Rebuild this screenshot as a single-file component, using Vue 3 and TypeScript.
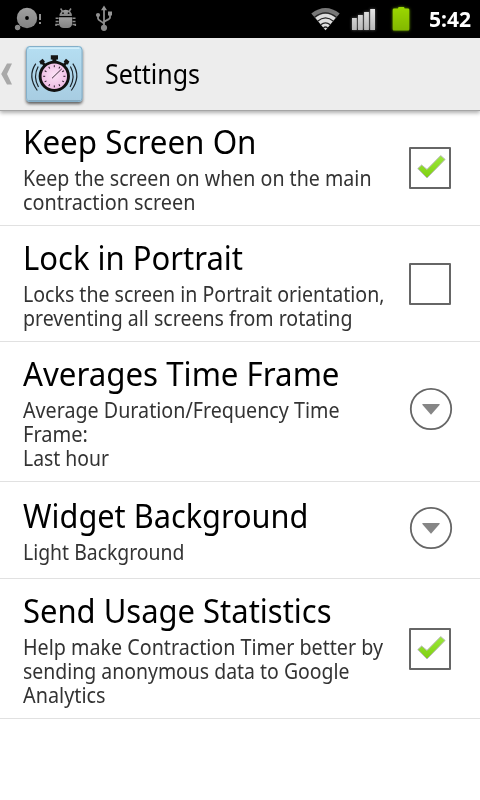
<script setup lang="ts">
interface Line { text: string; width: number }
interface Setting { title: Line; summary: Line[]; control: 'check' | 'menu'; checked?: boolean }

const line = (text: string, width: number): Line => ({ text, width })

const settings: Setting[] = [
  {
    title: line('Keep Screen On', 233.5),
    summary: [line('Keep the screen on when on the main', 348.5), line('contraction screen', 172.5)],
    control: 'check', checked: true,
  },
  {
    title: line('Lock in Portrait', 220),
    summary: [line('Locks the screen in Portrait orientation,', 361.5), line('preventing all screens from rotating', 329.5)],
    control: 'check', checked: false,
  },
  {
    title: line('Averages Time Frame', 316.5),
    summary: [line('Average Duration/Frequency Time', 316.5), line('Frame:', 65), line('Last hour', 86)],
    control: 'menu',
  },
  {
    title: line('Widget Background', 285.5),
    summary: [line('Light Background', 161.5)],
    control: 'menu',
  },
  {
    title: line('Send Usage Statistics', 308.5),
    summary: [line('Help make Contraction Timer better by', 360), line('sending anonymous data to Google', 326.5), line('Analytics', 82.5)],
    control: 'check', checked: true,
  },
]

// Condenses a line of text horizontally to the given width.
const vFit = {
  mounted(el: HTMLElement, binding: { value: number }) {
    el.style.transform = `scaleX(${binding.value / el.getBoundingClientRect().width})`
  },
}

const ticks = Array.from({ length: 12 }, (_, i) => i * 30)
</script>

<template>
  <div class="screen">
    <div class="status">
      <svg class="notifications" width="130" height="38" viewBox="0 0 130 38">
        <defs>
          <linearGradient id="grey" x1="0" y1="0" x2="0" y2="1">
            <stop offset="0" stop-color="#a0a0a0" /><stop offset="1" stop-color="#828282" />
          </linearGradient>
        </defs>
        <circle cx="27" cy="18" r="10.2" fill="url(#grey)" />
        <circle cx="27" cy="18" r="1.9" fill="#000" />
        <circle cx="17.6" cy="27.5" r="2.7" fill="#8a8a8a" />
        <path d="M39 14h2v6h-2zM39 22h2v2h-2z" fill="#909090" />
        <g fill="url(#grey)">
          <path d="M59.5 16a6.2 6.2 0 0 1 12.4 0z" />
          <path d="M59 17.3h13.2v6.2a4.6 4.6 0 0 1-4.6 4.6h-4a4.6 4.6 0 0 1-4.6-4.6z" />
        </g>
        <path d="M62.6 11.5l-2-3M69 11.5l2-3M55.6 18.2h3M55.6 21.5h3M56 26v-1.5h3M72.5 18.2h3M72.5 21.5h3M72.5 24.5h2.8v1.5" fill="none" stroke="#8c8c8c" stroke-width="1.5" />
        <circle cx="63" cy="13.2" r=".9" fill="#111" /><circle cx="68.6" cy="13.2" r=".9" fill="#111" />
        <g fill="none" stroke="#8e8e8e" stroke-width="1.8">
          <path d="M104 27V8M98 16v2.5c0 2.5 6 3 6 6M110 14v3.5c0 2.5-6 2.8-6 5" />
        </g>
        <path d="M104 5.5l3 4.8h-6zM108 11.4h4v4h-4z" fill="#969696" />
        <circle cx="98" cy="15" r="2.1" fill="#919191" />
        <circle cx="104" cy="27.8" r="3.1" fill="#888" />
      </svg>
      <svg class="indicators" width="120" height="38" viewBox="300 0 120 38">
        <defs>
          <linearGradient id="silver" x1="0" y1="0" x2="0" y2="1">
            <stop offset="0" stop-color="#e4e4e4" /><stop offset="1" stop-color="#b8b8b8" />
          </linearGradient>
          <linearGradient id="battery" x1="0" y1="0" x2="0" y2="1">
            <stop offset="0" stop-color="#9bd800" /><stop offset="1" stop-color="#82b800" />
          </linearGradient>
        </defs>
        <path d="M311.3 13.5Q325.5 2.5 339.7 13.5L325.5 30.2z" fill="#777" />
        <path d="M315.4 17.8Q325.5 9.5 335.6 17.8L325.5 30.2z" fill="#dedede" />
        <g fill="none" stroke="#252525" stroke-width="1.2">
          <path d="M314.5 17.2q11-8.8 22 0M317.5 21.2q8-6.8 16 0M320.7 24.8q4.8-4 9.6 0M323.3 28q2.2-2 4.4 0" />
        </g>
        <path class="signal" d="M352 18h4.8v12H352zM358 15h4.8v15H358zM364.1 12h4.8v18h-4.8zM370.2 9h4.8v21h-4.8z" fill="url(#silver)" />
        <path class="charge" d="M394.2 8.5h3.3c.5 0 .6-.2.7-.6.1-.7.4-.9 1-.9h4.2c.6 0 .9.2 1 .9.1.4.2.6.7.6h2.7c1 0 1.5.5 1.5 1.5v19c0 1-.5 1.5-1.5 1.5h-13.6c-1 0-1.5-.5-1.5-1.5V10c0-1 .5-1.5 1.5-1.5z" fill="url(#battery)" />
      </svg>
      <span v-fit="42" class="clock">5:42</span>
    </div>

    <header class="bar">
      <svg class="launcher" width="92" height="72" viewBox="0 38 92 72">
        <defs>
          <linearGradient id="tile" x1="0" y1="0" x2="0" y2="1">
            <stop offset="0" stop-color="#b5def2" /><stop offset="1" stop-color="#a7cce1" />
          </linearGradient>
          <radialGradient id="face" cx=".5" cy=".45" r=".6">
            <stop offset="0" stop-color="#fbe2f6" /><stop offset="1" stop-color="#ecb5e1" />
          </radialGradient>
        </defs>
        <path d="M7 63.5h5L7 74l5 10.5H7L1.2 74z" fill="#a9a9a9" />
        <rect class="tile" x="26" y="46" width="56.5" height="56" rx="4" fill="url(#tile)" />
        <rect x="26.5" y="46.5" width="55.5" height="55" rx="3.5" fill="none" stroke="#84afc9" stroke-width="1" />
        <path d="M29 48.2h50.5" stroke="#d2eefa" stroke-width="1.4" />
        <path d="M28.5 100.5h51.5" stroke="#86a9be" stroke-width="1.2" />
        <g fill="#151515">
          <path d="M50.8 55.2h7.2v4.3h-1.6V63h-4v-3.5h-1.6z" />
          <path d="M39.2 61.5l3.4-2.7 2.3 2.6-.8 1.2 2.5 2.5-2.5 2-2-2.8-1.4.2zM69.4 61.5L66 58.8l-2.3 2.6.8 1.2-2.5 2.5 2.5 2 2-2.8 1.4.2z" />
        </g>
        <circle cx="54.3" cy="76.3" r="14.2" fill="url(#face)" stroke="#111" stroke-width="2.9" />
        <path v-for="a in ticks" :key="a" d="M54.3 65.2v2" :transform="`rotate(${a} 54.3 76.3)`" stroke="#2a1d29" stroke-width="1" />
        <path d="M52 78.3l9.8-9.5" stroke="#2a1d29" stroke-width=".9" />
        <g fill="none" stroke="#1b2329" stroke-width="1.2">
          <path d="M38.2 66.5q-5.5 10 .3 20.5M35.8 63.7q-8.7 12.8 1.5 26.8M70.4 66.5q5.5 10-.3 20.5M72.8 63.7q8.7 12.8-1.5 26.8" />
        </g>
      </svg>
      <h1 v-fit="95" class="heading">Settings</h1>
    </header>

    <main class="list">
      <section v-for="s in settings" :key="s.title.text" class="row">
        <div class="copy" :class="{ short: s.summary.length === 1 }">
          <h2 v-fit="s.title.width" class="title">{{ s.title.text }}</h2>
          <p v-for="l in s.summary" :key="l.text" v-fit="l.width" class="summary">{{ l.text }}</p>
        </div>
        <div v-if="s.control === 'check'" class="box">
          <svg v-if="s.checked" width="38" height="38" viewBox="411 149 38 38">
            <defs>
              <linearGradient id="tick" x1="0" y1="0" x2="0" y2="1">
                <stop offset="0" stop-color="#9be83c" /><stop offset="1" stop-color="#7fd00f" />
              </linearGradient>
            </defs>
            <path d="M417.8 168.6l3.8-3.6 5.4 4.4 13.7-13.8 4.4 3.8L427 178z" fill="url(#tick)" stroke="#b9b9b9" stroke-width="1" stroke-linejoin="round" />
          </svg>
        </div>
        <svg v-else class="more" width="44" height="44" viewBox="0 0 44 44">
          <circle cx="22" cy="22" r="20.2" fill="none" stroke="#666" stroke-width="1.8" />
          <path d="M13.2 17.8q0-.8.8-.8h16q.8 0 .8.8L22 27.8z" fill="#868686" />
        </svg>
      </section>
    </main>
  </div>
</template>

<style>
body { background: #fff; }
</style>

<style scoped>
.screen { width: 480px; height: 800px; overflow: hidden; background: #fff; font-family: "Noto Sans", "Open Sans", sans-serif; color: #000; }
.status { display: flex; height: 38px; background: #000; color: #fff; }
.indicators { margin-left: 170px; }
.signal { filter: drop-shadow(0 0 1.5px rgba(255, 255, 255, .4)); }
.charge { filter: drop-shadow(0 0 1.5px rgba(140, 210, 0, .7)); }
.clock { flex: none; align-self: flex-start; margin-left: 8.5px; font-size: 21px; font-weight: 700; line-height: 38px; transform-origin: 0 0; white-space: nowrap; }
.bar { position: relative; display: flex; height: 72px; background: #ededed; box-shadow: 0 1px 0 #a5a5a5, 0 3px 4px rgba(0, 0, 0, .32); }
.tile { filter: drop-shadow(0 2px 1.5px rgba(0, 0, 0, .6)); }
.heading { flex: none; align-self: flex-start; margin: 0 0 0 13px; font-size: 27px; font-weight: 400; line-height: 72px; transform-origin: 0 0; white-space: nowrap; }
.row { box-sizing: border-box; display: flex; align-items: center; justify-content: space-between; min-height: 97px; padding: 12px 29px 11px 23px; border-bottom: 1px solid #e1e1e1; }
.copy { display: flex; flex-direction: column; align-items: flex-start; width: 370px; }
.short { padding-bottom: 1px; }
.title { margin: 0 0 5px; font-size: 33px; font-weight: 400; line-height: 39px; transform-origin: 0 0; white-space: nowrap; }
.summary { margin: 0; color: #333; font-size: 21px; line-height: 24px; transform-origin: 0 0; white-space: nowrap; }
.box { box-sizing: border-box; flex: none; width: 42px; height: 42px; border: 2px solid #666; border-radius: 1px; }
.box svg { display: block; }
.more { flex: none; margin: 0 -2px 6px 0; }
</style>
